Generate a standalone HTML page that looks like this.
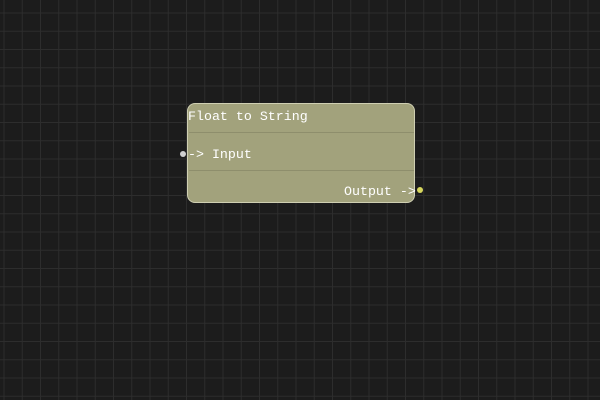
<!DOCTYPE html>
<html><head><meta charset="utf-8"><style>
html,body{margin:0;padding:0;width:600px;height:400px;overflow:hidden;background:#1c1c1c;}
.grid{position:absolute;left:0;top:0;width:600px;height:400px;
background-image:linear-gradient(to right,#2d2d2d 1px,transparent 1px),linear-gradient(to bottom,#2d2d2d 1px,transparent 1px);
background-size:18.25px 18.25px;background-position:3.5px 12.5px;}
.node{position:absolute;left:187px;top:103px;width:226px;height:98px;background:#a2a27c;border:1px solid #cfcfb2;border-radius:8px;box-sizing:content-box;}
.t{position:absolute;font-family:"Liberation Mono",monospace;font-size:13.3px;color:#fff;line-height:14px;white-space:pre;}
.sep{position:absolute;left:1px;right:0;height:1px;background:#8e8e6c;}
.dot{position:absolute;width:6px;height:6px;border-radius:50%;}
</style></head><body>
<div class="grid"></div>
<div class="node">
 <div class="sep" style="top:28px"></div>
 <div class="sep" style="top:66px"></div>
</div>
<div class="t" style="left:188px;top:110px">Float to String</div>
<div class="t" style="left:188px;top:148px">-&gt; Input</div>
<div class="t" style="left:344px;top:185px">Output -&gt;</div>
<div class="dot" style="left:180px;top:151px;background:#d0d0d0"></div>
<div class="dot" style="left:417px;top:187px;background:#d6d65e"></div>
</body></html>
